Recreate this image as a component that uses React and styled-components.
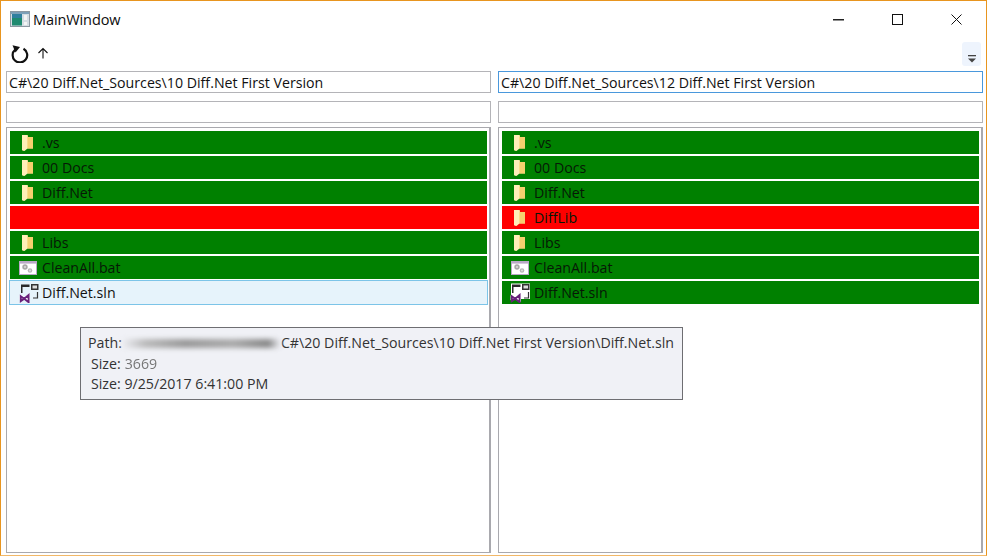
import React from "react";
import styled, { createGlobalStyle } from "styled-components";

const Global = createGlobalStyle`
  html, body { margin: 0; padding: 0; background: #fff; overflow: hidden; }
  * { box-sizing: border-box; }
`;

const Win = styled.div`
  width: 987px; height: 556px; position: relative; background: #fff;
  border: 1px solid #e8951f; border-bottom-color: #f2b868;
  display: flex; flex-direction: column;
  font-family: "Open Sans", "Noto Sans", sans-serif; color: #111;
  overflow: hidden;
`;
const TitleBar = styled.div`
  height: 36px; flex: none; display: flex; align-items: center; padding-left: 9px;
`;
const Title = styled.div`
  font-size: 14.5px; margin-left: 3px; letter-spacing: -0.1px; color: #0c0c0c;
`;
const Caption = styled.div`
  margin-left: auto; display: flex; align-items: center;
`;
const CapBtn = styled.div`
  width: 59px; height: 30px; display: flex; align-items: center; justify-content: center;
`;
const ToolBar = styled.div`
  height: 34px; flex: none; display: flex; align-items: center; padding: 0 0 2px 10px; gap: 8px;
`;
const Overflow = styled.div`
  margin-left: auto; margin-right: 5px; width: 19px; height: 24px; margin-top: 2px;
  background: #eef4fd; border-radius: 3px; display: flex; align-items: flex-end; justify-content: center; padding-bottom: 3px;
`;
const Panes = styled.div`
  display: grid; grid-template-columns: 485px 485px; column-gap: 7px; padding: 0 0 2px 5px; flex: 1; min-height: 0;
`;
const Pane = styled.div`
  display: flex; flex-direction: column; min-height: 0;
`;
const Field = styled.div`
  height: 22px; flex: none; border: 1px solid ${p => (p.$focus ? "#4a98dc" : "#b4b4b8")};
  font-size: 14.2px; line-height: 21px; padding-left: 2px; white-space: nowrap; overflow: hidden;
  margin-bottom: ${p => p.$mb}px; color: #111;
`;
const List = styled.div`
  flex: 1; border: 1px solid #a9a9ae; border-right-width: 2px; padding: 3px 2px 0 3px;
  display: flex; flex-direction: column; gap: 2px;
`;
const Row = styled.div`
  height: 23px; flex: none; background: ${p => p.$bg}; display: flex; align-items: center;
  font-size: 14.2px; color: #061806; padding-left: ${p => p.$pad}px;
`;
const HoverRow = styled(Row)`
  background: #e6f3fb; border: 1px solid #7cc4e8; margin: -1px; height: 25px; color: #111;
`;
const Label = styled.span`
  margin-left: ${p => p.$ml}px; white-space: nowrap;
`;
const Tooltip = styled.div`
  position: absolute; left: 79px; top: 326px; width: 603px; height: 73px;
  background: #f0f1f6; border: 1px solid #6e6e72; padding: 5px 7px;
  font-size: 14.2px; line-height: 20.5px; color: #333;
`;
const TipLine = styled.div`
  padding-left: ${p => p.$indent}px; white-space: nowrap; display: flex; align-items: center;
`;
const Smudge = styled.span`
  display: inline-block; width: 160px; height: 9px; margin: 0 0 0 -1px;
  background: linear-gradient(90deg, #f0f1f6, #bbb 15%, #999 40%, #aaa 70%, #888 92%, #f0f1f6);
  filter: blur(2.5px); border-radius: 5px;
`;
const Blurred = styled.span`
  margin-left: 4px; color: #777; filter: blur(0.6px);
`;

const Folder = () => (
  <svg width="13" height="18" viewBox="0 0 13 18">
    <path d="M1 1h5.500l.5 2h5v11.500H3.500l-1 2.500L1 16z" fill="#fbdc8c" />
    <path d="M1 1h5.500v13.500l-3 2.500-2.500-1z" fill="#ffeeb8" />
    <path d="M6.500 3H12v11.500H6.500z" fill="#f6d070" />
  </svg>
);
const Bat = () => (
  <svg width="18" height="14" viewBox="0 0 18 14">
    <rect x=".5" y=".5" width="17" height="13" fill="#fff" stroke="#b9a8c6" />
    <rect x="1" y="1" width="16" height="1.600" fill="#b9a8c6" />
    <circle cx="6" cy="6" r="2.700" fill="#a8a8a8" />
    <circle cx="6" cy="6" r="1" fill="#ddd" />
    <circle cx="11" cy="9.500" r="2.300" fill="#b6b6b6" />
    <circle cx="11" cy="9.500" r=".9" fill="#e4e4e4" />
  </svg>
);
const Sln = ({ plate }) => (
  <svg width="21" height="20" viewBox="0 0 21 20">
    {plate && <rect x="1" y=".5" width="19" height="15.500" fill="#fff" />}
    <path d="M2 1.500h8.500V4H3.500v6H2z" fill="#2a2a2a" />
    <rect x="12" y="1" width="7.500" height="6" fill="#333" />
    <rect x="13.500" y="2.500" width="4.500" height="3" fill="#ddd" />
    <path d="M18.500 9v6H14" fill="none" stroke="#333" strokeWidth="1.200" />
    <path d="M.5 12.500l2-1 3 2.500 4-3.500 1.500.5v7.500l-1.500.5-4-3.500-3 2.500-2-1z" fill="#fff" />
    <path d="M1.800 13.300l3.400 2.400-3.400 2.400zM9.600 12l-4.400 3.700 4.400 3.500z" fill="none" stroke="#68217a" strokeWidth="1.900" />
  </svg>
);
const ICONS = { folder: <Folder />, bat: <Bat />, sln: <Sln plate /> };
const PAD = { folder: 11, bat: 9, sln: 8 };
const GAP = { folder: 8, bat: 5, sln: 3 };

const Item = ({ bg, icon, name }) => (
  <Row $bg={bg} $pad={PAD[icon] ?? 0}>
    {icon && ICONS[icon]}
    {name && <Label $ml={GAP[icon]}>{name}</Label>}
  </Row>
);

const G = "#008000";
const R = "#ff0000";

export default function App() {
  return (
    <Win>
      <Global />
      <TitleBar>
        <svg width="20" height="16" viewBox="0 0 20 16">
          <rect x=".5" y=".5" width="19" height="15" fill="#d5dde3" stroke="#8d98a2" />
          <rect x="1" y="1" width="18" height="2" fill="#7da0b8" />
          <rect x="2" y="3" width="10" height="11.500" fill="#1f8a70" />
          <rect x="2" y="3" width="10" height="4" fill="#2f7f9f" />
          <rect x="14" y="4" width="3" height="5" fill="#f4f4f4" />
          <rect x="14" y="11" width="3" height="3" fill="#f4f4f4" />
        </svg>
        <Title>MainWindow</Title>
        <Caption>
          <CapBtn>
            <svg width="11" height="11" viewBox="0 0 11 11"><rect x="0" y="5" width="11" height="1.500" fill="#222" /></svg>
          </CapBtn>
          <CapBtn>
            <svg width="11" height="11" viewBox="0 0 11 11"><rect x=".5" y=".5" width="10" height="10" fill="none" stroke="#111" /></svg>
          </CapBtn>
          <CapBtn>
            <svg width="11" height="11" viewBox="0 0 11 11"><path d="M.5.500l10 10M10.500.500l-10 10" stroke="#111" strokeWidth="1" fill="none" /></svg>
          </CapBtn>
        </Caption>
      </TitleBar>
      <ToolBar>
        <svg width="18" height="19" viewBox="0 0 18 19">
          <path d="M12.500 4.800A7.300 7.300 0 1 1 4.200 5.600" fill="none" stroke="#111" strokeWidth="2.200" />
          <path d="M1.500 1.200L9 3 4.500 8.500z" fill="#111" />
        </svg>
        <svg width="12" height="12" viewBox="0 0 12 12">
          <path d="M6 11.500V1.500M1.500 6L6 1.500 10.500 6" fill="none" stroke="#111" strokeWidth="1.100" />
        </svg>
        <Overflow>
          <svg width="8" height="8" viewBox="0 0 8 8">
            <rect x="0" y="0" width="8" height="1.300" fill="#444" />
            <path d="M0 3.500h8L4 7.500z" fill="#444" />
          </svg>
        </Overflow>
      </ToolBar>
      <Panes>
        <Pane>
          <Field $mb={8}>C#\20 Diff.Net_Sources\10 Diff.Net First Version</Field>
          <Field $mb={4} />
          <List>
            <Item bg={G} icon="folder" name=".vs" />
            <Item bg={G} icon="folder" name="00 Docs" />
            <Item bg={G} icon="folder" name="Diff.Net" />
            <Item bg={R} />
            <Item bg={G} icon="folder" name="Libs" />
            <Item bg={G} icon="bat" name="CleanAll.bat" />
            <HoverRow $bg="#e6f3fb" $pad={9}>
              <Sln />
              <Label $ml={2}>Diff.Net.sln</Label>
            </HoverRow>
          </List>
        </Pane>
        <Pane>
          <Field $mb={8} $focus>C#\20 Diff.Net_Sources\12 Diff.Net First Version</Field>
          <Field $mb={4} />
          <List>
            <Item bg={G} icon="folder" name=".vs" />
            <Item bg={G} icon="folder" name="00 Docs" />
            <Item bg={G} icon="folder" name="Diff.Net" />
            <Item bg={R} icon="folder" name="DiffLib" />
            <Item bg={G} icon="folder" name="Libs" />
            <Item bg={G} icon="bat" name="CleanAll.bat" />
            <Item bg={G} icon="sln" name="Diff.Net.sln" />
          </List>
        </Pane>
      </Panes>
      <Tooltip>
        <TipLine $indent={0}>Path:<Smudge />C#\20 Diff.Net_Sources\10 Diff.Net First Version\Diff.Net.sln</TipLine>
        <TipLine $indent={3}>Size:<Blurred>3669</Blurred></TipLine>
        <TipLine $indent={3}>Size: 9/25/2017 6:41:00 PM</TipLine>
      </Tooltip>
    </Win>
  );
}
